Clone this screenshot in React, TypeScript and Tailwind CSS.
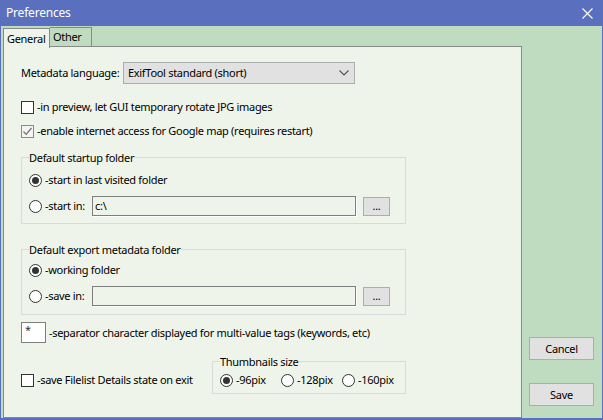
import React from 'react';

const CheckBox = ({ checked = false }: { checked?: boolean }) => (
  <span
    className={
      checked
        ? 'w-[13px] h-[13px] shrink-0 border border-[#8a8a8a] bg-[#f4f4f4] flex items-center justify-center'
        : 'w-[13px] h-[13px] shrink-0 border border-[#333333] bg-white'
    }
  >
    {checked && (
      <svg width="11" height="11" viewBox="0 0 11 11">
        <path d="M1.5 5.5 L4.2 8.3 L9.5 2" fill="none" stroke="#707070" strokeWidth="1.2" />
      </svg>
    )}
  </span>
);

const Radio = ({ checked = false }: { checked?: boolean }) => (
  <span className="w-[13px] h-[13px] shrink-0 rounded-full border border-[#333333] bg-white flex items-center justify-center">
    {checked && <span className="w-[7px] h-[7px] rounded-full bg-[#333333]" />}
  </span>
);

const PathInput = ({ value }: { value: string }) => (
  <div className="w-[264px] h-[20px] border border-[#7e7e7e] shadow-[1px_1px_0_#ffffff] bg-[#eef4ea] pl-[2px] flex items-center">
    {value}
  </div>
);

const DotsButton = () => (
  <div className="ml-[7px] w-[27px] h-[19px] border border-[#adadad] bg-[#e1e1e1] flex items-center justify-center leading-none pb-[1px]">
    ...
  </div>
);

const App = () => {
  return (
    <div className="w-[603px] h-[420px] bg-[#5a6fbe] flex flex-col font-['Noto_Sans',sans-serif] text-[11px] tracking-[-0.3px] leading-[16px] text-black whitespace-nowrap">
      {/* Title bar */}
      <div className="h-[26px] flex items-center pl-[6px] pr-[10px] text-white text-[12px] tracking-[-0.2px]">
        <span>Preferences</span>
        <span className="flex-1" />
        <svg width="11" height="11" viewBox="0 0 11 11">
          <path d="M0.5 0.5 L10.5 10.5 M10.5 0.5 L0.5 10.5" stroke="#ffffff" strokeWidth="1.1" />
        </svg>
      </div>

      <div className="flex-1 flex ml-[1px] mr-[1px] mb-[2px] bg-[#c0dcc0]">
        {/* Tabs + page */}
        <div className="w-[521px] flex flex-col pl-[2px] pt-[1px]">
          <div className="h-[20px] flex items-start">
            <div className="relative z-10 mt-[1px] h-[20px] w-[47px] border-l border-t border-r border-[#898989] bg-[#eef4ea] pl-[3px] pt-[2px]">
              General
            </div>
            <div className="h-[19px] w-[42px] border-t border-r border-[#898989] bg-[#c0dcc0] pl-[3px] pt-[1px]">
              Other
            </div>
          </div>

          <div className="flex-1 -mt-[1px] border border-[#898989] bg-[#eef4ea] pl-[17px] flex flex-col">
            {/* Metadata language */}
            <div className="mt-[15px] flex items-center">
              <span className="w-[102px]">Metadata language:</span>
              <div className="w-[232px] h-[22px] border border-[#adadad] bg-[#e1e1e1] pl-[4px] pr-[5px] flex items-center">
                <span className="flex-1">ExifTool standard (short)</span>
                <svg width="10" height="6" viewBox="0 0 10 6">
                  <path d="M0.5 0.5 L5 5 L9.5 0.5" fill="none" stroke="#555555" strokeWidth="1.2" />
                </svg>
              </div>
            </div>

            <div className="mt-[15px] h-[16px] flex items-center gap-[3px]">
              <CheckBox />
              <span>-in preview, let GUI temporary rotate JPG images</span>
            </div>
            <div className="mt-[8px] h-[16px] flex items-center gap-[3px]">
              <CheckBox checked />
              <span>-enable internet access for Google map (requires restart)</span>
            </div>

            {/* Default startup folder */}
            <fieldset className="mt-[9px] w-[385px] border border-[#dadada] px-[7px] pb-[7px]">
              <legend className="pt-[2px] leading-[16px]">Default startup folder</legend>
              <div className="mt-[6px] h-[16px] flex items-center gap-[3px]">
                <Radio checked />
                <span>-start in last visited folder</span>
              </div>
              <div className="mt-[8px] h-[20px] flex items-center">
                <Radio />
                <span className="ml-[3px] w-[47px]">-start in:</span>
                <PathInput value="c:\" />
                <DotsButton />
              </div>
            </fieldset>

            {/* Default export metadata folder */}
            <fieldset className="mt-[16px] w-[385px] border border-[#dadada] px-[7px] pb-[8px]">
              <legend className="pt-[2px] leading-[16px]">Default export metadata folder</legend>
              <div className="mt-[4px] h-[16px] flex items-center gap-[3px]">
                <Radio checked />
                <span>-working folder</span>
              </div>
              <div className="mt-[8px] h-[20px] flex items-center">
                <Radio />
                <span className="ml-[3px] w-[47px]">-save in:</span>
                <PathInput value="" />
                <DotsButton />
              </div>
            </fieldset>

            {/* Separator */}
            <div className="mt-[7px] flex items-center">
              <div className="w-[25px] h-[21px] border border-[#7e7e7e] bg-white pl-[3px] pt-[1px] text-[11px] leading-[12px] text-[#333333]">
                *
              </div>
              <span className="ml-[3px]">-separator character displayed for multi-value tags (keywords, etc)</span>
            </div>

            {/* Last row */}
            <div className="mt-[9px] flex items-start">
              <div className="w-[191px] mt-[20px] h-[16px] flex items-center gap-[3px]">
                <CheckBox />
                <span>-save Filelist Details state on exit</span>
              </div>
              <fieldset className="w-[194px] border border-[#dadada] px-[7px] pb-[5px]">
                <legend className="pt-[2px] leading-[16px]">Thumbnails size</legend>
                <div className="mt-[2px] h-[16px] flex items-center">
                  <div className="w-[61px] flex items-center gap-[3px]">
                    <Radio checked />
                    <span>-96pix</span>
                  </div>
                  <div className="w-[61px] flex items-center gap-[3px]">
                    <Radio />
                    <span>-128pix</span>
                  </div>
                  <div className="flex items-center gap-[3px]">
                    <Radio />
                    <span>-160pix</span>
                  </div>
                </div>
              </fieldset>
            </div>
          </div>
        </div>

        {/* Buttons */}
        <div className="flex-1 flex flex-col justify-end pl-[7px] pb-[12px] gap-[23px]">
          <div className="w-[65px] h-[23px] border border-[#adadad] bg-[#e1e1e1] flex items-center justify-center">
            Cancel
          </div>
          <div className="w-[65px] h-[23px] border border-[#adadad] bg-[#e1e1e1] flex items-center justify-center">
            Save
          </div>
        </div>
      </div>
    </div>
  );
};

export default App;
